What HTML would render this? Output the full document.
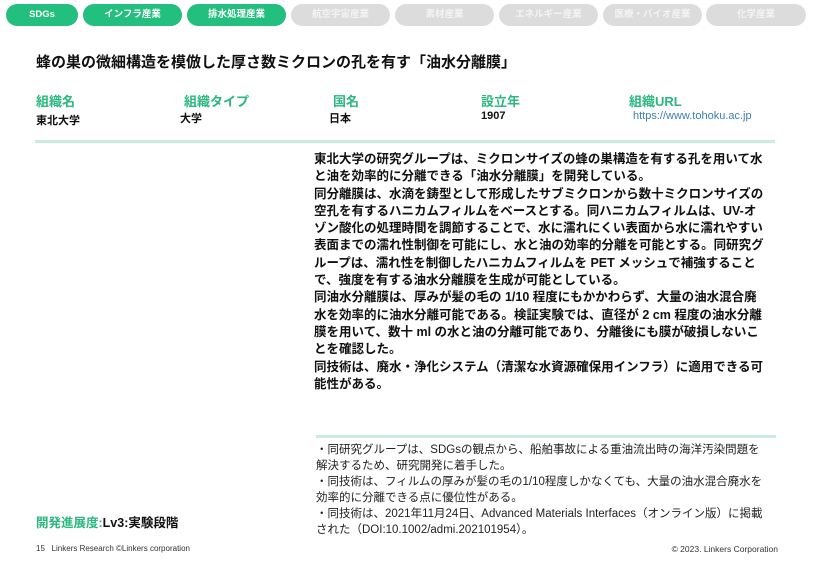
<!DOCTYPE html>
<html><head><meta charset="utf-8"><style>
body{margin:0;width:813px;height:563px;background:#fff;font-family:"Liberation Sans","Noto Sans CJK JP",sans-serif;position:relative;overflow:hidden;color:#111}
.p{position:absolute;top:4px;height:22px;border-radius:11px;color:#fff;font-size:9.5px;font-weight:bold;text-align:center;line-height:22px}
.g{background:#22bf7e}.n{background:#dcdcdc;color:#f4f4f4}
.a{position:absolute}
.lb{color:#2bb77f;font-size:13px;font-weight:bold;top:91px}
.v{font-size:11px;font-weight:bold;top:110px}
</style></head><body>
<div class="p g" style="left:6px;width:72px">SDGs</div>
<div class="p g" style="left:83px;width:99px">インフラ産業</div>
<div class="p g" style="left:187px;width:99px">排水処理産業</div>
<div class="p n" style="left:291px;width:99px">航空宇宙産業</div>
<div class="p n" style="left:395px;width:99px">素材産業</div>
<div class="p n" style="left:499px;width:99px">エネルギー産業</div>
<div class="p n" style="left:603px;width:99px">医療・バイオ産業</div>
<div class="p n" style="left:706px;width:100px">化学産業</div>
<div class="a" style="left:36px;top:51px;font-size:15px;font-weight:bold">蜂の巣の微細構造を模倣した厚さ数ミクロンの孔を有す「油水分離膜」</div>
<div class="a lb" style="left:36px">組織名</div><div class="a v" style="left:36px;top:112px">東北大学</div>
<div class="a lb" style="left:184px">組織タイプ</div><div class="a v" style="left:180px">大学</div>
<div class="a lb" style="left:333px">国名</div><div class="a v" style="left:329px">日本</div>
<div class="a lb" style="left:481px">設立年</div><div class="a v" style="left:481px">1907</div>
<div class="a lb" style="left:629px">組織URL</div><div class="a" style="left:633px;top:110px;font-size:11px;color:#3d7fb0">https://www.tohoku.ac.jp</div>
<div class="a" style="left:35px;top:140px;width:740px;height:3px;background:#c9ecdc"></div>
<div class="a" style="left:314px;top:151px;font-size:12.5px;font-weight:bold;line-height:17.3px;white-space:nowrap">東北大学の研究グループは、ミクロンサイズの蜂の巣構造を有する孔を用いて水<br>と油を効率的に分離できる「油水分離膜」を開発している。<br>同分離膜は、水滴を鋳型として形成したサブミクロンから数十ミクロンサイズの<br>空孔を有するハニカムフィルムをベースとする。同ハニカムフィルムは、UV-オ<br>ゾン酸化の処理時間を調節することで、水に濡れにくい表面から水に濡れやすい<br>表面までの濡れ性制御を可能にし、水と油の効率的分離を可能とする。同研究グ<br>ループは、濡れ性を制御したハニカムフィルムを PET メッシュで補強すること<br>で、強度を有する油水分離膜を生成が可能としている。<br>同油水分離膜は、厚みが髪の毛の 1/10 程度にもかかわらず、大量の油水混合廃<br>水を効率的に油水分離可能である。検証実験では、直径が 2 cm 程度の油水分離<br>膜を用いて、数十 ml の水と油の分離可能であり、分離後にも膜が破損しないこ<br>とを確認した。<br>同技術は、廃水・浄化システム（清潔な水資源確保用インフラ）に適用できる可<br>能性がある。</div>
<div class="a" style="left:316px;top:435px;width:460px;height:3px;background:#c9ecdc"></div>
<div class="a" style="left:316px;top:442px;font-size:11.5px;line-height:16px;white-space:nowrap;color:#222">・同研究グループは、SDGsの観点から、船舶事故による重油流出時の海洋汚染問題を<br>解決するため、研究開発に着手した。<br>・同技術は、フィルムの厚みが髪の毛の1/10程度しかなくても、大量の油水混合廃水を<br>効率的に分離できる点に優位性がある。<br>・同技術は、2021年11月24日、Advanced Materials Interfaces（オンライン版）に掲載<br>された（DOI:10.1002/admi.202101954）。</div>
<div class="a" style="left:36px;top:512px;font-size:12.5px;font-weight:bold"><span style="color:#2bb77f">開発進展度:</span>Lv3:実験段階</div>
<div class="a" style="left:36px;top:544px;font-size:8px;color:#333">15 &nbsp; Linkers Research ©Linkers corporation</div>
<div class="a" style="right:35px;top:544px;font-size:8.5px;color:#333">© 2023. Linkers Corporation</div>
</body></html>
